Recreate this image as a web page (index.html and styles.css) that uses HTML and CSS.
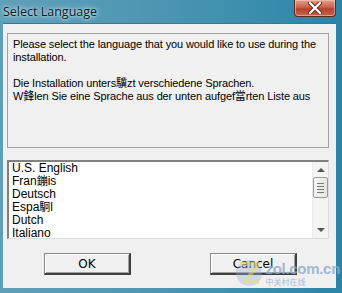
FILE: index.html
```html
<!DOCTYPE html>
<html lang="en">
<head>
  <meta charset="UTF-8" />
  <title>Select Language</title>
  <link rel="stylesheet" href="styles.css">
</head>
<body>
  <div class="window">
    <!-- title bar -->
    <div class="titlebar">
      <span class="title">Select Language</span>
      <div class="close-btn">
        <svg width="16" height="12" viewBox="0 0 16 12">
          <path d="M3 1 L13 11 M13 1 L3 11" stroke="#5a2218" stroke-width="4" stroke-linecap="round"/>
          <path d="M3 1 L13 11 M13 1 L3 11" stroke="#fff" stroke-width="2.4" stroke-linecap="round"/>
        </svg>
      </div>
    </div>

    <!-- client area -->
    <div class="client">
      <div class="info-box">
        <p>Please select the language that you would like to use during the<br>installation.</p>
        <p class="gap">Die Installation unters<span class="cjk">驥</span>zt verschiedene Sprachen.<br>W<span class="cjk">鋒</span>len Sie eine Sprache aus der unten aufgef<span class="cjk">當</span>rten Liste aus</p>
      </div>

      <div class="listbox">
        <ul class="items">
          <li>U.S. English</li>
          <li>Fran<span class="cjk">鏰</span>is</li>
          <li>Deutsch</li>
          <li>Espa<span class="cjk">駉</span>l</li>
          <li>Dutch</li>
          <li>Italiano</li>
        </ul>
        <div class="scrollbar">
          <div class="arrow up"></div>
          <div class="thumb"><i></i><i></i><i></i><i></i></div>
          <div class="track"></div>
          <div class="arrow down"></div>
        </div>
      </div>

      <div class="buttons">
        <button class="btn">OK</button>
        <button class="btn">Cancel</button>
      </div>

      <!-- watermark -->
      <div class="watermark">
        <svg class="wm-logo" width="28" height="30" viewBox="0 0 28 30">
          <circle cx="14" cy="15" r="13" fill="rgba(150,175,220,0.45)"/>
          <path d="M5 6 H23 L10 24 H24" fill="none" stroke="rgba(225,215,120,0.7)" stroke-width="4"/>
        </svg>
        <div class="wm-text">
          <span class="wm-site">zol.com.cn</span>
          <span class="wm-cn">中关村在线</span>
        </div>
      </div>
    </div>
  </div>
</body>
</html>
```

FILE: styles.css
```css
* {
  margin: 0;
  padding: 0;
  box-sizing: border-box;
}

body {
  width: 342px;
  height: 293px;
  overflow: hidden;
  font-family: "Liberation Sans", "Noto Sans CJK SC", sans-serif;
  font-size: 11px;
  color: #000;
}

/* aero frame */
.window {
  width: 342px;
  height: 293px;
  display: flex;
  flex-direction: column;
  padding: 0 6px 5px 3px;
  background: linear-gradient(to right, #5f9fb9 0%, #4f97b3 40%, #3d8fae 70%, #2b84a6 100%);
}

.titlebar {
  height: 23px;
  display: flex;
  align-items: flex-start;
  justify-content: space-between;
  flex-shrink: 0;
}

.title {
  font-family: "Open Sans", "Noto Sans", sans-serif;
  font-size: 12.5px;
  line-height: 23px;
  color: #0a1a22;
  text-shadow: 0 0 6px rgba(230, 245, 250, 0.9), 0 0 3px rgba(230, 245, 250, 0.9);
}

.close-btn {
  width: 42px;
  height: 17px;
  border: 1px solid #5b2a20;
  border-top: none;
  border-radius: 0 0 4px 4px;
  background: linear-gradient(to bottom, #e3a08e 0%, #c9634c 45%, #b2432c 55%, #c8634a 100%);
  display: flex;
  align-items: center;
  justify-content: center;
  box-shadow: inset 0 0 0 1px rgba(255, 220, 210, 0.5);
}

.client {
  position: relative;
  flex: 1;
  background: #f0f0f0;
  padding: 9px 7px 0 4px;
  border-top: 1px solid #3c7690;
}

.info-box {
  height: 115px;
  border: 1px solid #a0a0a0;
  padding: 4px 4px 4px 5px;
  line-height: 13px;
  letter-spacing: -0.12px;
  white-space: nowrap;
  overflow: hidden;
}

.info-box .gap {
  margin-top: 13px;
}

.cjk {
  font-family: "Noto Sans CJK SC", sans-serif;
  font-size: 11px;
  line-height: 1;
  letter-spacing: 0;
}

/* list box with sunken border */
.listbox {
  margin-top: 12px;
  height: 79px;
  background: #fff;
  border-style: solid;
  border-width: 2px 1px 1px 2px;
  border-color: #808080 #dcdcdc #dcdcdc #808080;
  display: flex;
}

.items {
  flex: 1;
  list-style: none;
  padding-left: 3px;
  font-size: 12px;
  line-height: 13px;
  overflow: hidden;
}

.scrollbar {
  width: 16px;
  background: #f4f4f4;
  display: flex;
  flex-direction: column;
  align-items: center;
  border-left: 1px solid #eaeaea;
}

.arrow {
  width: 0;
  height: 0;
  border-left: 4px solid transparent;
  border-right: 4px solid transparent;
}

.arrow.up {
  margin-top: 6px;
  border-bottom: 4px solid #555;
}

.arrow.down {
  margin-bottom: 6px;
  border-top: 4px solid #555;
}

.thumb {
  width: 15px;
  height: 21px;
  margin-top: 5px;
  border: 1px solid #9a9a9a;
  border-radius: 2px;
  background: linear-gradient(to right, #f6f6f6, #e4e4e4);
  display: flex;
  flex-direction: column;
  align-items: center;
  justify-content: center;
  gap: 2px;
}

.thumb i {
  display: block;
  width: 7px;
  height: 1px;
  background: #777;
}

.track {
  flex: 1;
}

.buttons {
  display: flex;
  gap: 79px;
  padding-left: 37px;
  margin-top: 14px;
}

.btn {
  width: 87px;
  height: 22px;
  font-family: "DejaVu Sans", sans-serif;
  font-size: 12px;
  background: #f0f0f0;
  color: #000;
  border-style: solid;
  border-width: 1px 2px 2px 1px;
  border-color: #8a8a8a #404040 #404040 #8a8a8a;
  box-shadow: inset 1px 1px 0 #fff, inset -1px -1px 0 #a0a0a0;
}

/* zol watermark over the corner */
.watermark {
  position: absolute;
  right: -4px;
  bottom: 0;
  display: flex;
  align-items: center;
  gap: 2px;
  opacity: 0.8;
}

.wm-text {
  display: flex;
  flex-direction: column;
  line-height: 1;
}

.wm-site {
  font-family: "Liberation Sans", sans-serif;
  font-weight: bold;
  font-size: 15px;
  letter-spacing: -0.3px;
  color: #8aaad0;
}

.wm-cn {
  font-family: "Noto Sans CJK SC", sans-serif;
  font-size: 8px;
  color: #9ab0c8;
  margin-top: 2px;
}
```
